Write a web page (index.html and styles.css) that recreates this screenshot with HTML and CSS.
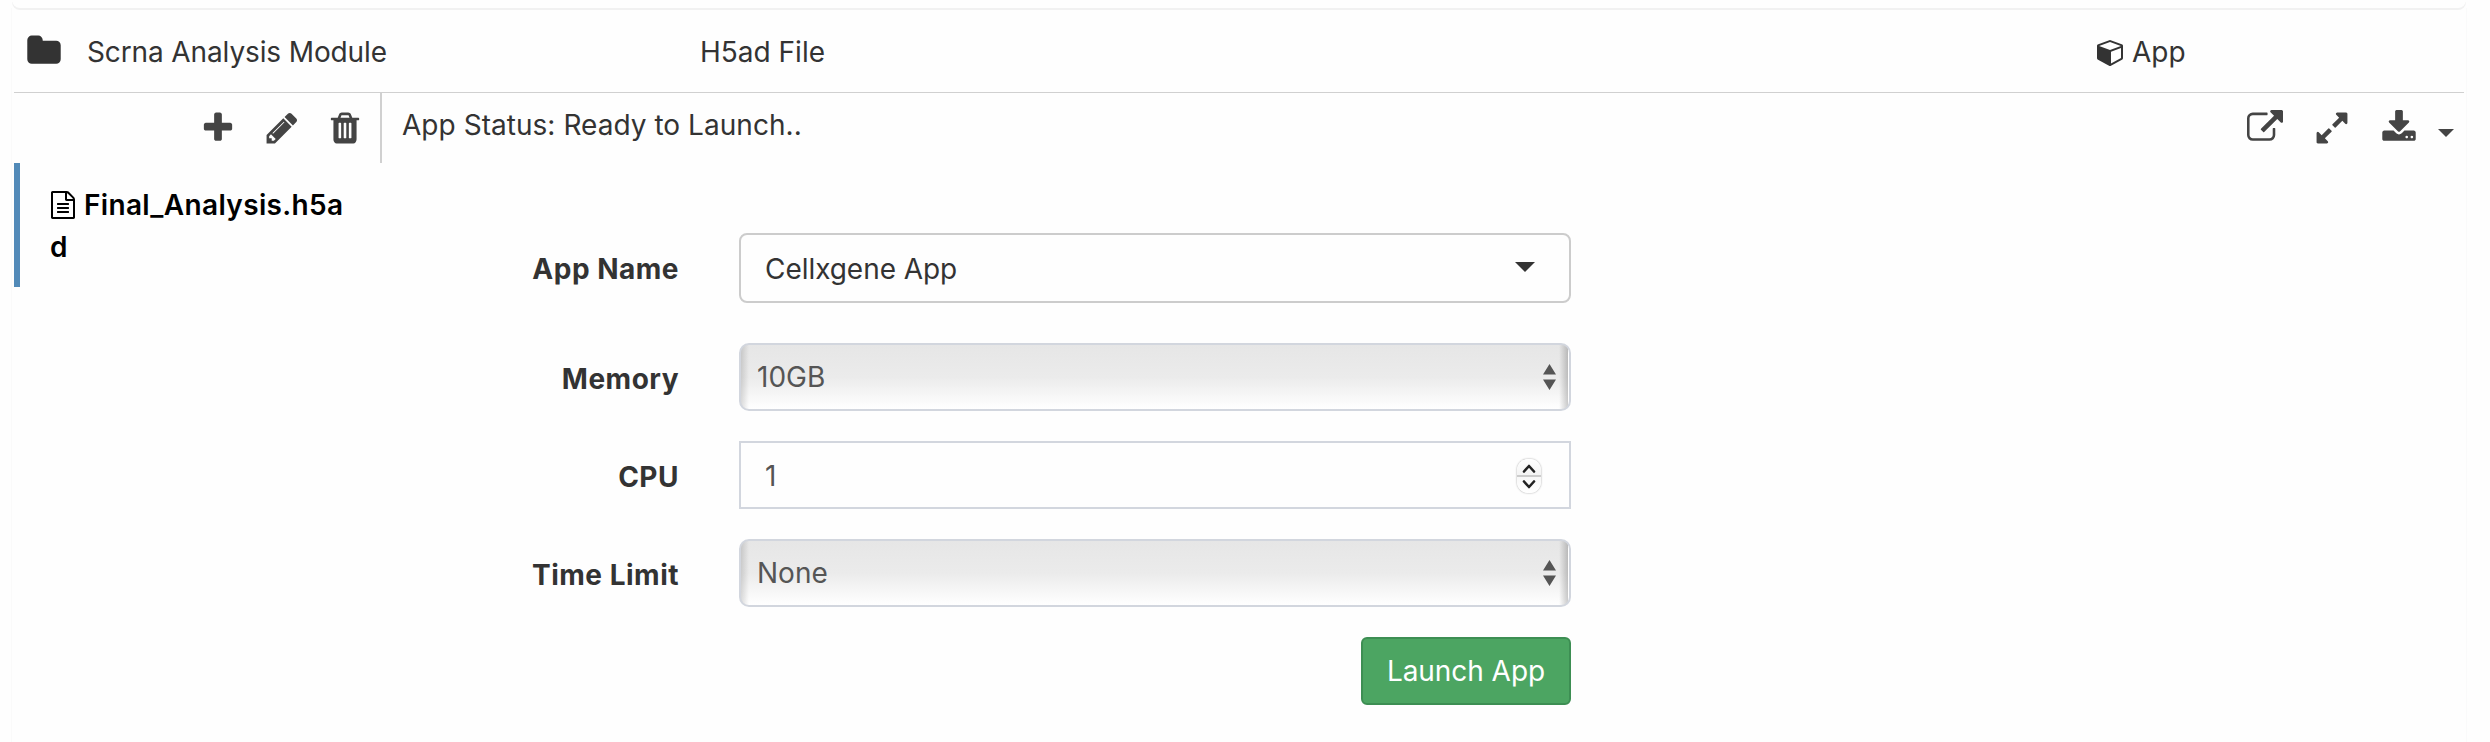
FILE: index.html
```html
<!DOCTYPE html>
<html lang="en">
<head>
<meta charset="utf-8">
<title>Scrna Analysis Module</title>
<link rel="stylesheet" href="styles.css">
</head>
<body>
<div class="prev-card"></div>
<main class="panel">
  <header class="row-head">
    <svg class="icon folder" viewBox="0 0 1792 1792"><path d="M1728 608v704q0 92-66 158t-158 66h-1216q-92 0-158-66t-66-158v-960q0-92 66-158t158-66h320q92 0 158 66t66 158v32h672q92 0 158 66t66 158z"/></svg>
    <span class="head-name">Scrna Analysis Module</span>
    <span class="head-type">H5ad File</span>
    <span class="head-app">
      <svg class="icon small" viewBox="0 0 1792 1792"><path d="M896 1629l640-349v-636l-640 233v752zm-64-865l698-254-698-254-698 254zm832-252v768q0 35-18 65t-49 47l-704 384q-28 16-61 16t-61-16l-704-384q-31-17-49-47t-18-65v-768q0-40 23-73t61-47l704-256q22-8 44-8t44 8l704 256q38 14 61 47t23 73z"/></svg>
      <span>App</span>
    </span>
  </header>
  <div class="body">
    <aside class="side">
      <div class="side-tools">
        <svg class="icon" viewBox="0 0 1792 1792"><path d="M1600 736v192q0 40-28 68t-68 28h-416v416q0 40-28 68t-68 28h-192q-40 0-68-28t-28-68v-416h-416q-40 0-68-28t-28-68v-192q0-40 28-68t68-28h416v-416q0-40 28-68t68-28h192q40 0 68 28t28 68v416h416q40 0 68 28t28 68z"/></svg>
        <svg class="icon" viewBox="0 0 1792 1792"><path d="M491 1536l91-91-235-235-91 91v107h128v128h107zm523-928q0-22-22-22-10 0-17 7l-542 542q-7 7-7 17 0 22 22 22 10 0 17-7l542-542q7-7 7-17zm-54-192l416 416-832 832h-416v-416zm683 96q0 53-37 90l-166 166-416-416 166-165q36-38 90-38 53 0 91 38l235 234q37 39 37 91z"/></svg>
        <svg class="icon" viewBox="0 0 1792 1792"><path d="M704 1376v-704q0-14-9-23t-23-9h-64q-14 0-23 9t-9 23v704q0 14 9 23t23 9h64q14 0 23-9t9-23zm256 0v-704q0-14-9-23t-23-9h-64q-14 0-23 9t-9 23v704q0 14 9 23t23 9h64q14 0 23-9t9-23zm256 0v-704q0-14-9-23t-23-9h-64q-14 0-23 9t-9 23v704q0 14 9 23t23 9h64q14 0 23-9t9-23zm-544-992h448l-48-117q-7-9-17-11h-317q-10 2-17 11zm928 32v64q0 14-9 23t-23 9h-96v948q0 83-47 143.5t-113 60.5h-832q-66 0-113-58.5t-47-141.5v-952h-96q-14 0-23-9t-9-23v-64q0-14 9-23t23-9h309l70-167q15-37 54-63t79-26h320q40 0 79 26t54 63l70 167h309q14 0 23 9t9 23z"/></svg>
      </div>
      <div class="file">
        <svg class="icon small file-icon" viewBox="0 0 1792 1792"><path d="M1596 380q28 28 48 76t20 88v1152q0 40-28 68t-68 28h-1344q-40 0-68-28t-28-68v-1600q0-40 28-68t68-28h896q40 0 88 20t76 48zm-444-244v376h376q-10-29-22-41l-313-313q-12-12-41-22zm384 1528v-1024h-416q-40 0-68-28t-28-68v-416h-768v1536h1280zm-1024-864q0-14 9-23t23-9h704q14 0 23 9t9 23v64q0 14-9 23t-23 9h-704q-14 0-23-9t-9-23v-64zm736 224q14 0 23 9t9 23v64q0 14-9 23t-23 9h-704q-14 0-23-9t-9-23v-64q0-14 9-23t23-9h704zm0 256q14 0 23 9t9 23v64q0 14-9 23t-23 9h-704q-14 0-23-9t-9-23v-64q0-14 9-23t23-9h704z"/></svg>Final_Analysis.h5ad
      </div>
    </aside>
    <section class="content">
      <div class="status">
        <span class="status-text">App Status: Ready to Launch..</span>
        <div class="tools">
          <svg class="icon" viewBox="0 0 1792 1792"><path d="M1408 928v320q0 119-84.5 203.5t-203.5 84.5h-832q-119 0-203.5-84.5t-84.5-203.5v-832q0-119 84.5-203.5t203.5-84.5h704q14 0 23 9t9 23v64q0 14-9 23t-23 9h-704q-66 0-113 47t-47 113v832q0 66 47 113t113 47h832q66 0 113-47t47-113v-320q0-14 9-23t23-9h64q14 0 23 9t9 23zm384-864v512q0 26-19 45t-45 19-45-19l-176-176-652 652q-10 10-23 10t-23-10l-114-114q-10-10-10-23t10-23l652-652-176-176q-19-19-19-45t19-45 45-19h512q26 0 45 19t19 45z"/></svg>
          <svg class="icon" viewBox="0 0 1792 1792"><path d="M883 1056q0 13-10 23l-332 332 144 144q19 19 19 45t-19 45-45 19h-448q-26 0-45-19t-19-45v-448q0-26 19-45t45-19 45 19l144 144 332-332q10-10 23-10t23 10l114 114q10 10 10 23zm781-864v448q0 26-19 45t-45 19-45-19l-144-144-332 332q-10 10-23 10t-23-10l-114-114q-10-10-10-23t10-23l332-332-144-144q-19-19-19-45t19-45 45-19h448q26 0 45 19t19 45z"/></svg>
          <svg class="icon" viewBox="0 0 1792 1792"><path d="M1344 1344q0-26-19-45t-45-19-45 19-19 45 19 45 45 19 45-19 19-45zm256 0q0-26-19-45t-45-19-45 19-19 45 19 45 45 19 45-19 19-45zm128-224v320q0 40-28 68t-68 28h-1472q-40 0-68-28t-28-68v-320q0-40 28-68t68-28h465l135 136q58 56 136 56t136-56l136-136h464q40 0 68 28t28 68zm-325-569q17 41-14 70l-448 448q-18 19-45 19t-45-19l-448-448q-31-29-14-70 17-39 59-39h256v-448q0-26 19-45t45-19h256q26 0 45 19t19 45v448h256q42 0 59 39z"/></svg>
          <svg class="caret" viewBox="0 0 16 8"><path d="M0 0h16L8 8z"/></svg>
        </div>
      </div>
      <form class="form">
        <div class="field">
          <span class="label">App Name</span>
          <div class="control dropdown"><span>Cellxgene App</span><svg class="drop-caret" viewBox="0 0 20 10"><path d="M0 0h20L10 10z"/></svg></div>
        </div>
        <div class="field">
          <span class="label">Memory</span>
          <div class="control select"><span>10GB</span><svg class="updown" viewBox="0 0 13 26"><path d="M0 10.500h13L6.500 0zM0 15.500h13L6.500 26z"/></svg></div>
        </div>
        <div class="field">
          <span class="label">CPU</span>
          <div class="control number"><span>1</span><span class="spinner"><svg viewBox="0 0 24 34"><path d="M7 12.500l5-5.500 5 5.500M7 22.500l5 5.500 5-5.500"/></svg></span></div>
        </div>
        <div class="field">
          <span class="label">Time Limit</span>
          <div class="control select"><span>None</span><svg class="updown" viewBox="0 0 13 26"><path d="M0 10.500h13L6.500 0zM0 15.500h13L6.500 26z"/></svg></div>
        </div>
        <div class="actions"><button class="launch" type="button">Launch App</button></div>
      </form>
    </section>
  </div>
</main>
</body>
</html>
```
FILE: styles.css
```css
* { box-sizing: border-box; }
body {
  margin: 0;
  height: 742px;
  overflow: hidden;
  background: #fefefe;
  color: #333;
  font: 28px/40px Inter, "Liberation Sans", sans-serif;
  white-space: nowrap;
}
.prev-card {
  height: 8px;
  margin-left: 12px;
  width: 2454px;
  border-radius: 0 0 8px 8px;
  background: #fefefe;
  box-shadow: 0 2px 0 #f1f1f1;
}
.panel {
  width: 2456px;
  height: 734px;
  margin-left: 11px;
  padding: 0 2px;
  border: solid #fafafa;
  border-width: 0 1px;
}
.row-head {
  display: flex;
  height: 85px;
  padding: 24px 0 0 12px;
  border-bottom: 1px solid #d0d0d0;
}
.icon { display: block; flex: none; width: 36px; height: 36px; fill: #444; }
.icon.small { width: 28px; height: 28px; }
.folder { margin-top: 1px; fill: #333; }
.head-name { flex: none; width: 638px; padding-left: 25px; letter-spacing: -.12px; }
.head-type { flex: none; width: 1397px; }
.head-app { display: flex; }
.head-app .icon { margin: 6px 7px 0 0; fill: #333; }
.body { display: flex; }
.side { width: 366px; flex: none; }
.side-tools {
  display: flex;
  justify-content: flex-end;
  gap: 27.5px;
  height: 70px;
  padding: 17px 17px 0 0;
}
.file {
  height: 124px;
  padding: 21px 29px 0 30px;
  border-left: 6px solid #528ab8;
  color: #000;
  font-weight: 600;
  line-height: 42px;
  letter-spacing: .34px;
  white-space: normal;
  word-break: break-all;
}
.file-icon { display: inline-block; margin: 0 7px 0 -1px; fill: #000; vertical-align: -4px; }
.content { flex: 1; }
.status {
  display: flex;
  justify-content: space-between;
  height: 70px;
  padding: 12px 10px 0 20px;
  border-left: 2px solid #d0d0d0;
}
.status-text { letter-spacing: .04px; }
.tools { display: flex; gap: 31px; padding-top: 5px; }
.caret { width: 16px; height: 8px; margin: 19px 0 0 -10px; fill: #444; }
.form { display: grid; width: 1191px; padding-top: 70px; }
.field { display: grid; grid-template-columns: 299px 832px; column-gap: 60px; margin-bottom: 30px; }
.field:first-child { margin-bottom: 40px; }
.label { padding-top: 16px; font-weight: 700; letter-spacing: .5px; text-align: right; }
.control {
  display: flex;
  align-items: center;
  justify-content: space-between;
  height: 68px;
  border: 2px solid #d2d6de;
  color: #555;
}
.dropdown {
  height: 70px;
  padding: 2px 34px 0 24px;
  border-color: #ccc;
  border-radius: 8px;
  color: #333;
  letter-spacing: -.05px;
}
.drop-caret { width: 20px; height: 10px; margin-top: -4px; fill: #333; }
.select {
  padding: 0 13px 0 16px;
  border-radius: 10px;
  background:
    linear-gradient(90deg, #0002, #0000 8px) no-repeat,
    linear-gradient(270deg, #fff 1px, #0003 1px, #0000 10px) no-repeat,
    linear-gradient(#e6e6e6, #ebebeb 50%, #fff);
}
.updown { width: 13px; height: 26px; fill: #555; }
.number { padding: 1px 28px 0 24px; }
.spinner {
  width: 24px;
  height: 34px;
  border-radius: 11px;
  background: linear-gradient(#fff, #f4f4f4 46%, #ccc 47%, #ccc 52%, #f8f8f8 53%, #fff);
  box-shadow: 0 0 2px #999;
}
.spinner svg { display: block; width: 24px; height: 34px; fill: none; stroke: #222; stroke-width: 2.6; stroke-linecap: round; stroke-linejoin: round; }
.actions { display: flex; justify-content: flex-end; }
.launch {
  width: 210px;
  height: 68px;
  padding: 0;
  border: 2px solid #3d8e53;
  border-radius: 6px;
  background: #4ca562;
  color: #fff;
  font: inherit;
  letter-spacing: -.05px;
}
```
